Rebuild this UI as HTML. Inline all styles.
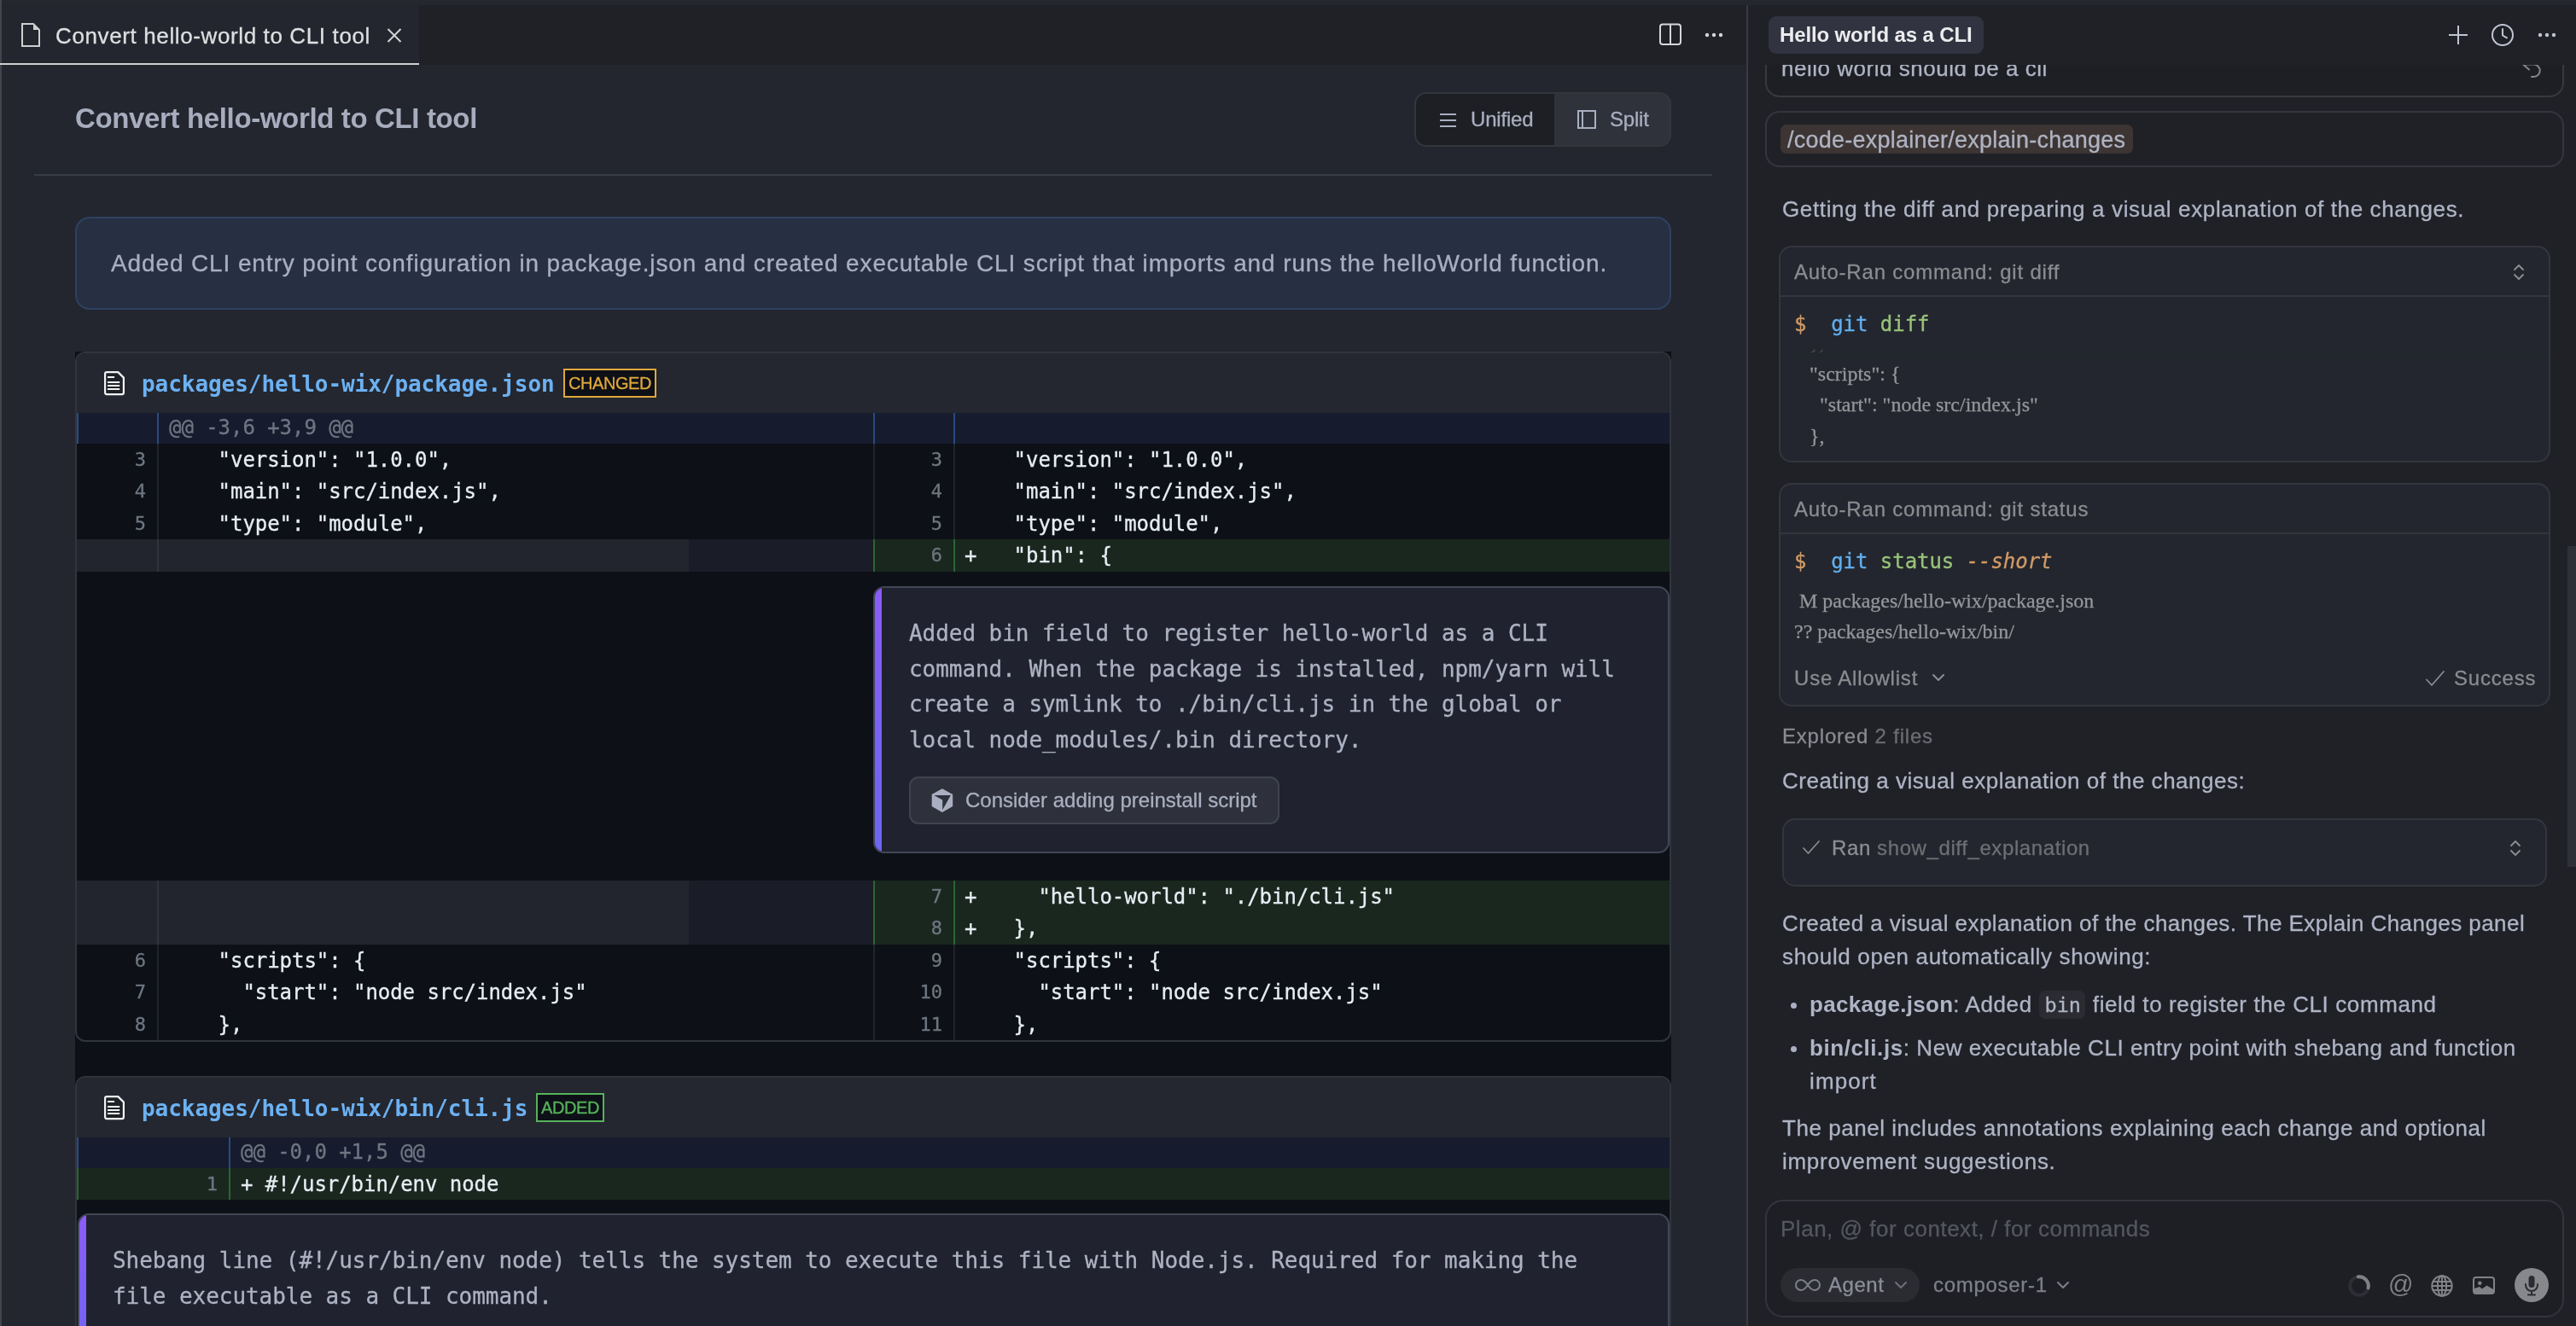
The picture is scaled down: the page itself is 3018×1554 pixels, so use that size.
<!DOCTYPE html>
<html lang="en">
<head>
<meta charset="utf-8">
<title>Convert hello-world to CLI tool</title>
<style>
*{box-sizing:border-box;margin:0;padding:0}
html,body{width:3018px;height:1554px;overflow:hidden;background:#23262e}
body{font-family:"Liberation Sans",sans-serif;position:relative;color:#a9afc0;-webkit-font-smoothing:antialiased;-webkit-text-stroke:.3px}
b,#title,.fname,.nostroke{-webkit-text-stroke:0}
.a{position:absolute}
.t{position:absolute;white-space:pre;will-change:transform}
.mono{font-family:"DejaVu Sans Mono","Liberation Mono",monospace}
.serif{font-family:"Liberation Serif",serif}
svg{position:absolute;overflow:visible}

/* ---------- chrome ---------- */
#topstrip{left:0;top:0;width:3018px;height:6px;background:#24272e}
#tabbar{left:0;top:6px;width:2046px;height:70px;background:#1f2127}
#leftline{left:0;top:0;width:2px;height:1554px;background:#43454b}
#tab{left:0;top:6px;width:491px;height:70px;background:#23262e}
#tabline{left:0;top:74px;width:491px;height:2px;background:#cfcfd0}
#tabtext{left:65px;top:24px;line-height:36px;font-size:26px;letter-spacing:.62px;color:#dedfe1}
#vsep{left:2046px;top:6px;width:2px;height:1548px;background:#393b42}

/* ---------- editor ---------- */
#title{left:88px;top:117px;line-height:44px;font-size:33px;font-weight:700;letter-spacing:-.36px;color:#a7adbe}
#toggle{left:1657px;top:108px;width:301px;height:64px;border:2px solid #34363d;border-radius:14px;background:#2f323b;overflow:hidden}
#tg-l{left:0;top:0;width:162px;height:60px;background:#1e1f24}
.tgt{top:14px;line-height:32px;font-size:24px;color:#a9afc0;letter-spacing:-.2px}
#hr{left:40px;top:204px;width:1966px;height:2px;background:#373c47}
#summary{left:88px;top:254px;width:1870px;height:109px;border:2px solid #2e4162;border-radius:17px;background:#272f42}
#sumtext{left:130px;top:289px;line-height:40px;font-size:28px;letter-spacing:.88px;color:#a9afc0}
#dark{left:88px;top:412px;width:1870px;height:1142px;background:#0d1117}

.file{position:absolute;left:88px;width:1870px;border:2px solid #30343c;border-radius:12px;overflow:hidden;background:#0d1117}
.fh{position:absolute;left:0;top:0;width:100%;background:#24272f}
.fname{will-change:transform;position:absolute;white-space:pre;font-family:"DejaVu Sans Mono","Liberation Mono",monospace;font-weight:700;font-size:26px;letter-spacing:-.053px;color:#6cb1f2;line-height:40px}
.badge{will-change:transform;position:absolute;height:34px;border:2px solid #dfa83c;background:#0d1017;color:#dfa83c;font-size:20px;line-height:30px;text-align:center;letter-spacing:-.45px}
.row{will-change:transform;position:absolute;left:0;width:1866px;height:37.5px;line-height:39.5px;font-family:"DejaVu Sans Mono","Liberation Mono",monospace;font-size:24px;letter-spacing:-.049px;color:#e6edf3;white-space:pre}
.row .n{position:absolute;top:-1.5px;text-align:right;color:#6e7681;font-size:22px}
.row .c{position:absolute;top:0}
.hunk{color:#6e7681}
.vb{position:absolute;width:2px}
.ann{position:absolute;border:2px solid #424654;border-radius:13px;background:#20232f;overflow:hidden}
.ann .bar{position:absolute;left:0;top:0;width:8px;height:100%;background:linear-gradient(180deg,#8b5cf6,#6b66f1)}
.anntext{will-change:transform;position:absolute;white-space:pre;font-family:"DejaVu Sans Mono","Liberation Mono",monospace;font-size:26px;line-height:41.6px;letter-spacing:-.053px;color:#adb2c3}

/* ---------- right panel ---------- */
.rtx{font-size:26px;letter-spacing:.52px;color:#afb4c5}
.cbox{border:2px solid #33363d;border-radius:15px;background:#23262e}
.chd{line-height:36px;font-size:24px;letter-spacing:.8px;color:#8b8c91}
.cmd{line-height:36px;font-size:24px;letter-spacing:-.05px}
.out{line-height:36.5px;font-size:24px;color:#95969b}
</style>
</head>
<body>
<!-- window chrome -->
<div class="a" id="tabbar"></div>
<div class="a" id="tab"></div>
<div class="a" id="topstrip"></div>
<div class="a" id="leftline"></div>
<div class="a" id="tabline"></div>
<svg style="left:24px;top:26px" width="24" height="30" viewBox="0 0 24 30"><path d="M2 2 H15 L22 9 V28 H2 Z" fill="none" stroke="#cfcfd0" stroke-width="2"/><path d="M15 2 V9 H22 Z" fill="#cfcfd0"/></svg>
<div class="t" id="tabtext">Convert hello-world to CLI tool</div>
<svg style="left:453px;top:33px" width="18" height="17" viewBox="0 0 18 17"><path d="M1.5 1 L16.5 16 M16.5 1 L1.5 16" stroke="#d4d4d6" stroke-width="2" fill="none"/></svg>
<svg style="left:1943px;top:27px" width="28" height="27" viewBox="0 0 28 27"><rect x="2" y="1.5" width="24" height="23.5" rx="3" fill="none" stroke="#d6d6d8" stroke-width="2"/><path d="M14 1.5 V25" stroke="#d6d6d8" stroke-width="2"/></svg>
<svg style="left:1996px;top:37px" width="24" height="8" viewBox="0 0 24 8"><circle cx="4" cy="4" r="2.2" fill="#d6d6d8"/><circle cx="12" cy="4" r="2.2" fill="#d6d6d8"/><circle cx="20" cy="4" r="2.2" fill="#d6d6d8"/></svg>

<!-- editor header -->
<div class="t" id="title">Convert hello-world to CLI tool</div>
<div class="a" id="toggle">
  <div class="a" id="tg-l"></div>
  <svg style="left:28px;top:22px" width="20" height="18" viewBox="0 0 20 18"><path d="M0 2 H19 M0 9 H19 M0 16 H19" stroke="#a9afc0" stroke-width="2.2"/></svg>
  <div class="t tgt" style="left:64px">Unified</div>
  <svg style="left:189px;top:19px" width="22" height="22" viewBox="0 0 22 22"><rect x="1" y="1" width="20" height="20" fill="none" stroke="#a9afc0" stroke-width="2"/><path d="M6 1 V21" stroke="#a9afc0" stroke-width="2"/></svg>
  <div class="t tgt" style="left:227px">Split</div>
</div>
<div class="a" id="hr"></div>
<div class="a" id="summary"></div>
<div class="t" id="sumtext">Added CLI entry point configuration in package.json and created executable CLI script that imports and runs the helloWorld function.</div>

<!-- diff area -->
<div class="a" id="dark"></div>
<!--FILE1-->
<div class="file" style="top:412px;height:809px">
<div class="fh" style="height:70px"></div>
<svg style="left:32px;top:21px" width="24" height="29" viewBox="0 0 24 29"><path d="M3.1 1.1 H16.3 L22.9 7.6 V25 Q22.9 27.1 20.9 27.1 H3.1 Q1.1 27.1 1.1 25.1 V3.1 Q1.1 1.1 3.1 1.1 Z" fill="#1f2128" stroke="#f2f2f4" stroke-width="2.2" stroke-linejoin="round"/><path d="M4 7 H12.1 M4 13 H18.2 M4 17 H18.2 M4 21 H18.2" stroke="#f2f2f4" stroke-width="2"/></svg>
<div class="fname" style="left:76px;top:16px">packages/hello-wix/package.json</div>
<div class="badge" style="left:570px;top:18px;width:109px">CHANGED</div>
<div class="a" style="left:0px;top:70px;width:1866px;height:36px;background:#161c2d"></div>
<div class="vb" style="left:0px;top:70px;height:36px;background:#2b4a82"></div>
<div class="vb" style="left:94px;top:70px;height:36px;background:#2b4a82"></div>
<div class="vb" style="left:933px;top:70px;height:36px;background:#2b4a82"></div>
<div class="vb" style="left:1027px;top:70px;height:36px;background:#2b4a82"></div>
<div class="row hunk" style="top:70px;height:36px;line-height:35px"><span class="c" style="left:108px">@@ -3,6 +3,9 @@</span></div>
<div class="vb" style="left:94px;top:106px;height:37.5px;background:#20242b"></div><div class="vb" style="left:933px;top:106px;height:37.5px;background:#20242b"></div><div class="vb" style="left:1027px;top:106px;height:37.5px;background:#20242b"></div><div class="row" style="top:106px"><span class="n" style="left:10px;width:71px">3</span><span class="c" style="left:108px">    "version": "1.0.0",</span><span class="n" style="left:943px;width:71px">3</span><span class="c" style="left:1040px">    "version": "1.0.0",</span></div>
<div class="vb" style="left:94px;top:143px;height:37.5px;background:#20242b"></div><div class="vb" style="left:933px;top:143px;height:37.5px;background:#20242b"></div><div class="vb" style="left:1027px;top:143px;height:37.5px;background:#20242b"></div><div class="row" style="top:143px"><span class="n" style="left:10px;width:71px">4</span><span class="c" style="left:108px">    "main": "src/index.js",</span><span class="n" style="left:943px;width:71px">4</span><span class="c" style="left:1040px">    "main": "src/index.js",</span></div>
<div class="vb" style="left:94px;top:181px;height:37.5px;background:#20242b"></div><div class="vb" style="left:933px;top:181px;height:37.5px;background:#20242b"></div><div class="vb" style="left:1027px;top:181px;height:37.5px;background:#20242b"></div><div class="row" style="top:181px"><span class="n" style="left:10px;width:71px">5</span><span class="c" style="left:108px">    "type": "module",</span><span class="n" style="left:943px;width:71px">5</span><span class="c" style="left:1040px">    "type": "module",</span></div>
<div class="a" style="left:0px;top:218px;width:717px;height:37.5px;background:#22252e"></div><div class="a" style="left:717px;top:218px;width:216px;height:37.5px;background:#1a1d27"></div><div class="vb" style="left:94px;top:218px;height:37.5px;background:#30333b"></div><div class="a" style="left:933px;top:218px;width:933px;height:37.5px;background:#1a271f"></div><div class="vb" style="left:933px;top:218px;height:37.5px;background:#2b6534"></div><div class="vb" style="left:1027px;top:218px;height:37.5px;background:#2b6534"></div><div class="row" style="top:218px"><span class="n" style="left:943px;width:71px">6</span><span class="c" style="left:1040px">+   "bin": {</span></div>
<div class="ann" style="left:933px;top:273px;width:933px;height:313px"><div class="bar"></div></div>
<div class="anntext" style="left:975px;top:307.5px">Added bin field to register hello-world as a CLI
command. When the package is installed, npm/yarn will
create a symlink to ./bin/cli.js in the global or
local node_modules/.bin directory.</div>
<div class="a" style="left:975px;top:496px;width:434px;height:56px;border:2px solid #40444f;border-radius:11px;background:#2e313b"></div>
<svg style="left:1001px;top:510px" width="26" height="29" viewBox="0 0 26 29"><path d="M12.9 0.2 L25.2 7 V20.9 L12.9 28 L0.7 20.9 V7 Z" fill="#a9afc0"/><path d="M3.3 8.1 H22.9 L13.2 25.3 V13.6 Z" fill="#2e313b"/></svg>
<div class="t" style="left:1041px;top:508px;line-height:32px;font-size:24px;color:#a9afc0">Consider adding preinstall script</div>
<div class="a" style="left:0px;top:618px;width:717px;height:37.5px;background:#22252e"></div><div class="a" style="left:717px;top:618px;width:216px;height:37.5px;background:#1a1d27"></div><div class="vb" style="left:94px;top:618px;height:37.5px;background:#30333b"></div><div class="a" style="left:933px;top:618px;width:933px;height:37.5px;background:#1a271f"></div><div class="vb" style="left:933px;top:618px;height:37.5px;background:#2b6534"></div><div class="vb" style="left:1027px;top:618px;height:37.5px;background:#2b6534"></div><div class="row" style="top:618px"><span class="n" style="left:943px;width:71px">7</span><span class="c" style="left:1040px">+     "hello-world": "./bin/cli.js"</span></div>
<div class="a" style="left:0px;top:655px;width:717px;height:37.5px;background:#22252e"></div><div class="a" style="left:717px;top:655px;width:216px;height:37.5px;background:#1a1d27"></div><div class="vb" style="left:94px;top:655px;height:37.5px;background:#30333b"></div><div class="a" style="left:933px;top:655px;width:933px;height:37.5px;background:#1a271f"></div><div class="vb" style="left:933px;top:655px;height:37.5px;background:#2b6534"></div><div class="vb" style="left:1027px;top:655px;height:37.5px;background:#2b6534"></div><div class="row" style="top:655px"><span class="n" style="left:943px;width:71px">8</span><span class="c" style="left:1040px">+   },</span></div>
<div class="vb" style="left:94px;top:693px;height:37.5px;background:#20242b"></div><div class="vb" style="left:933px;top:693px;height:37.5px;background:#20242b"></div><div class="vb" style="left:1027px;top:693px;height:37.5px;background:#20242b"></div><div class="row" style="top:693px"><span class="n" style="left:10px;width:71px">6</span><span class="c" style="left:108px">    "scripts": {</span><span class="n" style="left:943px;width:71px">9</span><span class="c" style="left:1040px">    "scripts": {</span></div>
<div class="vb" style="left:94px;top:730px;height:37.5px;background:#20242b"></div><div class="vb" style="left:933px;top:730px;height:37.5px;background:#20242b"></div><div class="vb" style="left:1027px;top:730px;height:37.5px;background:#20242b"></div><div class="row" style="top:730px"><span class="n" style="left:10px;width:71px">7</span><span class="c" style="left:108px">      "start": "node src/index.js"</span><span class="n" style="left:943px;width:71px">10</span><span class="c" style="left:1040px">      "start": "node src/index.js"</span></div>
<div class="vb" style="left:94px;top:768px;height:37.5px;background:#20242b"></div><div class="vb" style="left:933px;top:768px;height:37.5px;background:#20242b"></div><div class="vb" style="left:1027px;top:768px;height:37.5px;background:#20242b"></div><div class="row" style="top:768px"><span class="n" style="left:10px;width:71px">8</span><span class="c" style="left:108px">    },</span><span class="n" style="left:943px;width:71px">11</span><span class="c" style="left:1040px">    },</span></div>
</div>
<!--/FILE1-->
<!--FILE2-->
<div class="file" style="top:1261px;height:320px">
<div class="fh" style="height:70px"></div>
<svg style="left:32px;top:21px" width="24" height="29" viewBox="0 0 24 29"><path d="M3.1 1.1 H16.3 L22.9 7.6 V25 Q22.9 27.1 20.9 27.1 H3.1 Q1.1 27.1 1.1 25.1 V3.1 Q1.1 1.1 3.1 1.1 Z" fill="#1f2128" stroke="#f2f2f4" stroke-width="2.2" stroke-linejoin="round"/><path d="M4 7 H12.1 M4 13 H18.2 M4 17 H18.2 M4 21 H18.2" stroke="#f2f2f4" stroke-width="2"/></svg>
<div class="fname" style="left:76px;top:16px">packages/hello-wix/bin/cli.js</div>
<div class="badge" style="left:538px;top:18px;width:80px;border-color:#56b35a;color:#56b35a">ADDED</div>
<div class="a" style="left:0px;top:70px;width:1866px;height:36px;background:#161c2d"></div>
<div class="vb" style="left:0px;top:70px;height:36px;background:#2b4a82"></div>
<div class="vb" style="left:178px;top:70px;height:36px;background:#2b4a82"></div>
<div class="row hunk" style="top:70px;height:36px;line-height:35px"><span class="c" style="left:192px">@@ -0,0 +1,5 @@</span></div>
<div class="a" style="left:0px;top:106px;width:1866px;height:37px;background:#1a271f"></div>
<div class="vb" style="left:0px;top:106px;height:37px;background:#2b6534"></div>
<div class="vb" style="left:178px;top:106px;height:37px;background:#2b6534"></div>
<div class="row" style="top:106px"><span class="n" style="left:90px;width:75px">1</span><span class="c" style="left:192px">+ #!/usr/bin/env node</span></div>
<div class="ann" style="left:1px;top:159px;width:1865px;height:200px"><div class="bar"></div></div>
<div class="anntext" style="left:42px;top:193.5px">Shebang line (#!/usr/bin/env node) tells the system to execute this file with Node.js. Required for making the
file executable as a CLI command.</div>
</div>
<!--/FILE2-->
<div class="a" id="vsep"></div>
<!--RIGHT-->
<div class="a" id="rp" style="left:2048px;top:6px;width:970px;height:1548px;background:#1f2127"></div>
<!-- clipped scroll area below header -->
<div class="a" style="left:2048px;top:76px;width:970px;height:1330px;overflow:hidden">
 <div class="a" style="left:20px;top:-40px;width:936px;height:78px;border:2px solid #37393f;border-radius:17px;background:#1e1f24"></div>
 <div class="t rtx" style="left:39px;top:-14px;line-height:36px">hello world should be a cli</div>
 <svg style="left:906px;top:-2px" width="24" height="20" viewBox="0 0 24 20"><path d="M9 8.5 L2 2.5 L10.5 1.2 M2.6 2.6 H14.5 A7.2 7.2 0 0 1 14.5 17 H12" fill="none" stroke="#85878d" stroke-width="2" stroke-linecap="round" stroke-linejoin="round" transform="translate(0,-1)"/></svg>
</div>
<!-- header -->
<div class="a" style="left:2072px;top:19px;width:252px;height:44px;border-radius:9px;background:#313440"></div>
<div class="t" style="left:2085px;top:23px;line-height:36px;font-size:24px;font-weight:700;letter-spacing:-.13px;color:#ececee;-webkit-text-stroke:0">Hello world as a CLI</div>
<svg style="left:2869px;top:30px" width="22" height="22" viewBox="0 0 22 22"><path d="M11 0 V22 M0 11 H22" stroke="#c1c5d2" stroke-width="2"/></svg>
<svg style="left:2918px;top:27px" width="28" height="28" viewBox="0 0 28 28"><circle cx="14" cy="14" r="12" fill="none" stroke="#c1c5d2" stroke-width="2"/><path d="M14 7 V14.5 L19 17.3" fill="none" stroke="#c1c5d2" stroke-width="2" stroke-linecap="round" stroke-linejoin="round"/></svg>
<svg style="left:2972px;top:37px" width="24" height="8" viewBox="0 0 24 8"><circle cx="4" cy="4" r="2.2" fill="#c1c5d2"/><circle cx="12" cy="4" r="2.2" fill="#c1c5d2"/><circle cx="20" cy="4" r="2.2" fill="#c1c5d2"/></svg>

<!-- slash command bubble -->
<div class="a" style="left:2068px;top:130px;width:936px;height:66px;border:2px solid #34363d;border-radius:17px;background:#1f2127"></div>
<div class="a" style="left:2086px;top:146px;width:413px;height:34px;border-radius:7px;background:#3d3533"></div>
<div class="t" style="left:2094px;top:146px;line-height:36px;font-size:27px;letter-spacing:.24px;color:#aeb3c3">/code-explainer/explain-changes</div>

<div class="t rtx" style="left:2088px;top:227px;line-height:36px;letter-spacing:.63px">Getting the diff and preparing a visual explanation of the changes.</div>

<!-- command box 1 -->
<div class="a cbox" style="left:2084px;top:288px;width:904px;height:254px"></div>
<div class="a" style="left:2086px;top:346px;width:900px;height:2px;background:#33363d"></div>
<div class="t chd" style="left:2102px;top:301px">Auto-Ran command: git diff</div>
<svg class="updn" style="left:2944px;top:309px" width="14" height="20" viewBox="0 0 14 20"><path d="M2 7 L7 2 L12 7 M2 13 L7 18 L12 13" fill="none" stroke="#8c8e95" stroke-width="1.8" stroke-linecap="round" stroke-linejoin="round"/></svg>
<div class="t cmd mono" style="left:2102px;top:362px"><span style="color:#d19a66">$</span>  <span style="color:#61afef">git</span> <span style="color:#98c379">diff</span></div>
<div class="a" style="left:2086px;top:407px;width:900px;height:130px;overflow:hidden">
 <div class="a" style="left:0;top:0;width:900px;height:12px;background:linear-gradient(180deg,#23262e 10%,rgba(35,38,46,0));z-index:2"></div>
 <div class="t serif out" style="left:16px;top:-24.4px">   },
   "scripts": {
     "start": "node src/index.js"
   },</div>
</div>

<!-- command box 2 -->
<div class="a cbox" style="left:2084px;top:566px;width:904px;height:262px"></div>
<div class="a" style="left:2086px;top:624px;width:900px;height:2px;background:#33363d"></div>
<div class="t chd" style="left:2102px;top:579px">Auto-Ran command: git status</div>
<div class="t cmd mono" style="left:2102px;top:640px"><span style="color:#d19a66">$</span>  <span style="color:#61afef">git</span> <span style="color:#98c379">status</span> <span style="color:#d19a66;font-style:italic">--short</span></div>
<div class="t serif out" style="left:2102px;top:686.5px;line-height:35.8px"> M packages/hello-wix/package.json
?? packages/hello-wix/bin/</div>
<div class="t chd" style="left:2102px;top:777px">Use Allowlist</div>
<svg style="left:2263px;top:789px" width="16" height="10" viewBox="0 0 16 10"><path d="M2 2 L8 8 L14 2" fill="none" stroke="#8c8e95" stroke-width="2" stroke-linecap="round" stroke-linejoin="round"/></svg>
<svg style="left:2841px;top:785px" width="24" height="20" viewBox="0 0 24 20"><path d="M2 11.5 L8 18 L22 2" fill="none" stroke="#8c8e95" stroke-width="1.7" stroke-linecap="round" stroke-linejoin="round"/></svg>
<div class="t chd" style="left:2875px;top:777px">Success</div>

<div class="t" style="left:2088px;top:845px;line-height:36px;font-size:24px;letter-spacing:.8px;color:#8a8b90">Explored <span style="color:#6c6d72">2 files</span></div>
<div class="t rtx" style="left:2088px;top:897px;line-height:36px">Creating a visual explanation of the changes:</div>

<!-- tool call box -->
<div class="a cbox" style="left:2088px;top:959px;width:896px;height:80px"></div>
<svg style="left:2111px;top:984px" width="22" height="18" viewBox="0 0 22 18"><path d="M2 10 L7.5 16 L20 2" fill="none" stroke="#8c8d92" stroke-width="1.7" stroke-linecap="round" stroke-linejoin="round"/></svg>
<div class="t" style="left:2146px;top:976px;line-height:36px;font-size:24px;letter-spacing:.6px;color:#8e8f94">Ran <span style="color:#6e6f74">show_diff_explanation</span></div>
<svg class="updn" style="left:2940px;top:984px" width="14" height="20" viewBox="0 0 14 20"><path d="M2 7 L7 2 L12 7 M2 13 L7 18 L12 13" fill="none" stroke="#8c8e95" stroke-width="1.8" stroke-linecap="round" stroke-linejoin="round"/></svg>

<div class="t rtx" style="left:2088px;top:1063px;line-height:39px"><span style="letter-spacing:.44px">Created a visual explanation of the changes. The Explain Changes panel</span>
<span style="letter-spacing:.64px">should open automatically showing:</span></div>
<div class="a" style="left:2097.5px;top:1174.5px;width:7px;height:7px;border-radius:4px;background:#aab0c1"></div>
<div class="a" style="left:2389px;top:1161px;width:54px;height:33px;border-radius:7px;background:#2a2c32"></div>
<div class="t rtx" style="left:2120px;top:1158px;line-height:39px;letter-spacing:.6px"><b style="letter-spacing:.3px">package.json</b>: Added <span class="mono" style="font-size:22px;letter-spacing:0;padding:0 6px 0 7px;font-size:23.5px">bin</span> field to register the CLI command</div>
<div class="a" style="left:2097.5px;top:1225.5px;width:7px;height:7px;border-radius:4px;background:#aab0c1"></div>
<div class="t rtx" style="left:2120px;top:1209px;line-height:39px;letter-spacing:.57px"><b>bin/cli.js</b>: New executable CLI entry point with shebang and function
<span style="letter-spacing:1.1px">import</span></div>
<div class="t rtx" style="left:2088px;top:1303px;line-height:39px"><span style="letter-spacing:.54px">The panel includes annotations explaining each change and optional</span>
<span style="letter-spacing:.71px">improvement suggestions.</span></div>

<!-- input box -->
<div class="a" style="left:2068px;top:1406px;width:936px;height:138px;border:2px solid #33353c;border-radius:21px;background:#1e1f24"></div>
<div class="t" style="left:2086px;top:1422px;line-height:36px;font-size:26px;letter-spacing:.52px;color:#54575f">Plan, @ for context, / for commands</div>
<div class="a" style="left:2086px;top:1486px;width:163px;height:40px;border-radius:20px;background:#2b2c32"></div>
<svg style="left:2103px;top:1498px" width="30" height="16" viewBox="0 0 30 16"><path d="M15 8 C12 3.5 9.5 2 7 2 A6 6 0 0 0 7 14 C9.5 14 12 12.5 15 8 C18 3.5 20.5 2 23 2 A6 6 0 0 1 23 14 C20.5 14 18 12.5 15 8 Z" fill="none" stroke="#7d808a" stroke-width="2"/></svg>
<div class="t" style="left:2142px;top:1488px;line-height:36px;font-size:24px;letter-spacing:.55px;color:#8b8e98">Agent</div>
<svg style="left:2219px;top:1501px" width="16" height="10" viewBox="0 0 16 10"><path d="M2 2 L8 8 L14 2" fill="none" stroke="#6d7079" stroke-width="2" stroke-linecap="round" stroke-linejoin="round"/></svg>
<div class="t" style="left:2265px;top:1488px;line-height:36px;font-size:24px;letter-spacing:.7px;color:#7d808a">composer-1</div>
<svg style="left:2409px;top:1501px" width="16" height="10" viewBox="0 0 16 10"><path d="M2 2 L8 8 L14 2" fill="none" stroke="#7d808a" stroke-width="2" stroke-linecap="round" stroke-linejoin="round"/></svg>
<svg style="left:2751px;top:1494px" width="26" height="26" viewBox="0 0 26 26"><circle cx="13" cy="13" r="10.8" fill="none" stroke="#2d2f35" stroke-width="4"/><path d="M11.8 2.3 A10.8 10.8 0 0 1 23.5 15.4" fill="none" stroke="#7f8186" stroke-width="4" stroke-linecap="round"/></svg>
<div class="t" style="left:2797.5px;top:1487px;line-height:36px;font-size:29px;color:#808287;-webkit-text-stroke:0">@</div>
<svg style="left:2848px;top:1494px" width="26" height="26" viewBox="0 0 26 26"><circle cx="13" cy="13" r="11.7" fill="none" stroke="#808287" stroke-width="2"/><ellipse cx="13" cy="13" rx="5.2" ry="11.7" fill="none" stroke="#808287" stroke-width="2"/><path d="M1.5 13 H24.5 M3 8 H23 M3 18 H23 M13 1.3 V24.7" stroke="#808287" stroke-width="1.9" fill="none"/></svg>
<svg style="left:2897px;top:1496px" width="26" height="21" viewBox="0 0 26 21"><rect x="1" y="1" width="24" height="19" rx="3" fill="none" stroke="#808287" stroke-width="2"/><circle cx="8.3" cy="7.8" r="2.3" fill="#808287"/><path d="M2 14 L8 12 L11 14.5 L16.5 10.5 L24 15 V19 H2 Z" fill="#808287"/></svg>
<div class="a" style="left:2946px;top:1486px;width:40px;height:40px;border-radius:20px;background:#86888c"></div>
<svg style="left:2956px;top:1494px" width="20" height="26" viewBox="0 0 20 26"><rect x="6.5" y="1" width="7" height="14" rx="3.5" fill="#2a2c33"/><path d="M3 11 V12 A7 7 0 0 0 17 12 V11 M10 19 V23.5 M6 23.5 H14" fill="none" stroke="#2a2c33" stroke-width="2" stroke-linecap="round"/></svg>

<!-- scrollbar -->
<div class="a" style="left:3008px;top:640px;width:10px;height:376px;background:#2f3138"></div>
<!--/RIGHT-->
</body>
</html>
